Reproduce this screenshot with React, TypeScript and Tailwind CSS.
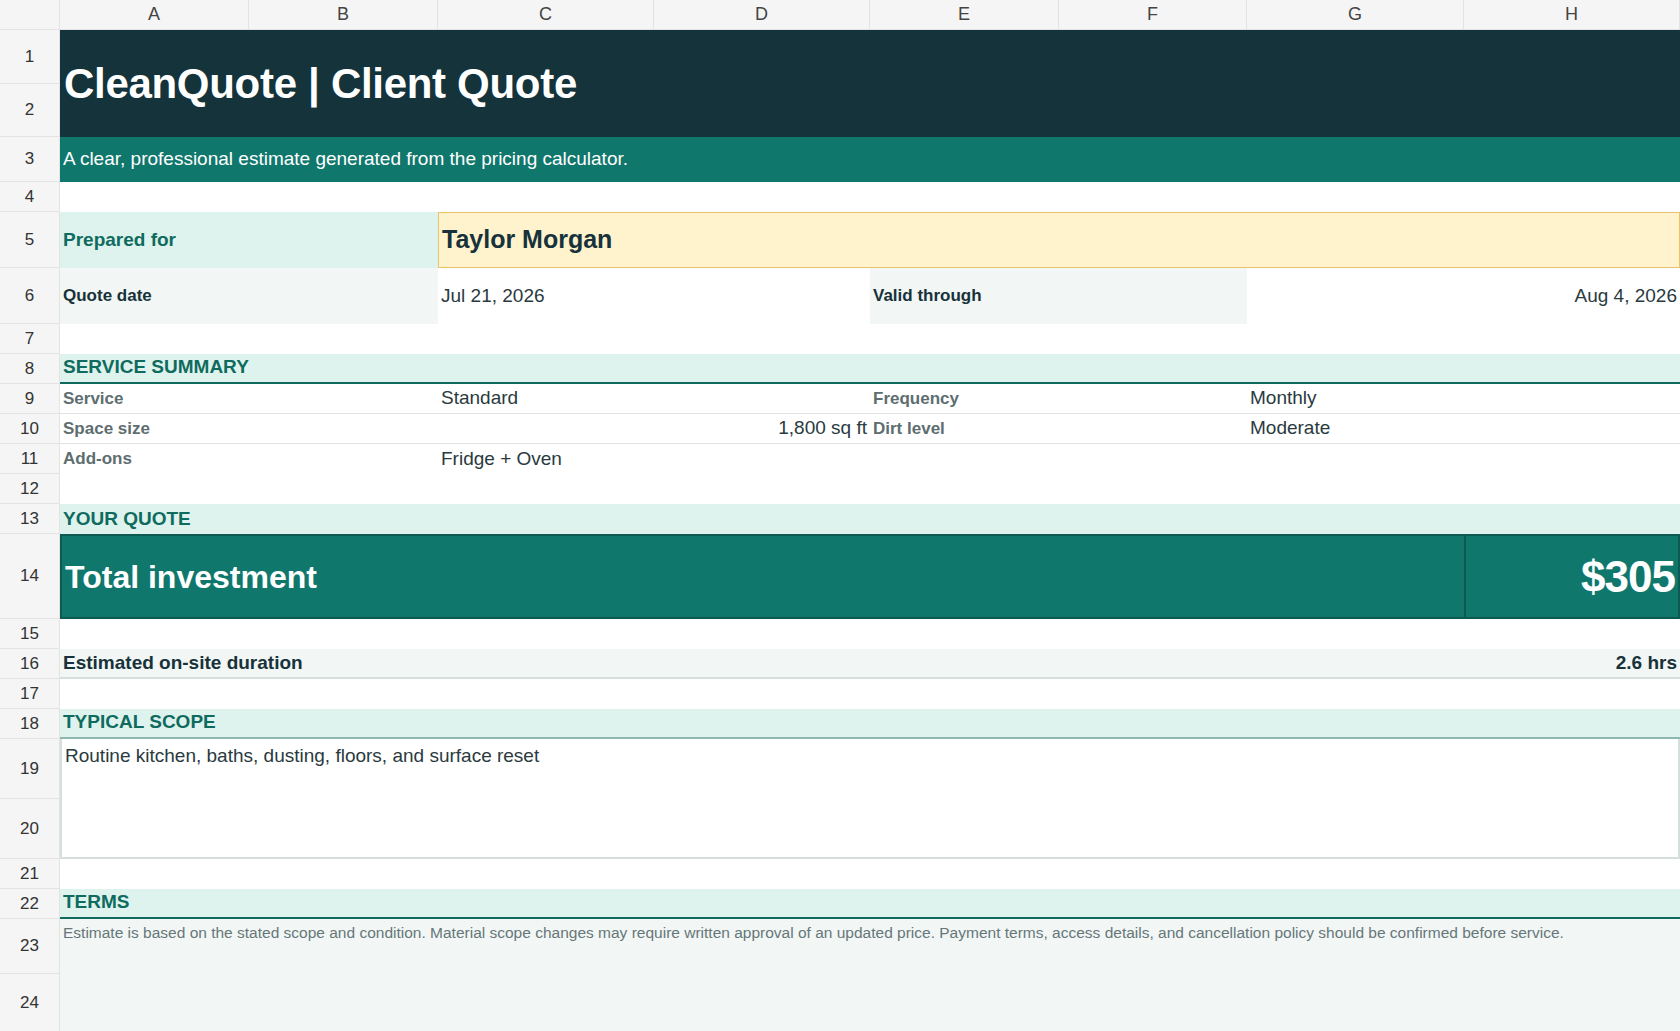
import React from "react";

const RH = ({ n }: { n: number | string }) => (
  <div className="bg-[#f5f5f5] border-r border-b border-[#e3e3e3] flex items-center justify-center text-[17px] text-[#333]">{n}</div>
);

export default function App() {
  const cols = ["A", "B", "C", "D", "E", "F", "G", "H"];
  return (
    <div
      className="w-[1680px] h-[1031px] overflow-hidden bg-white text-[#17323a]"
      style={{ fontFamily: '"Liberation Sans", Arial, sans-serif' }}
    >
      <div className="grid grid-cols-[60px_189px_189px_216px_216px_189px_188px_217px_216px] grid-rows-[30px_54px_53px_45px_30px_56px_56px_30px_30px_30px_30px_30px_30px_30px_85px_30px_30px_30px_30px_60px_60px_30px_30px_55px_58px]">
        {/* header */}
        <div className="bg-[#f5f5f5] border-r border-b border-[#e3e3e3]" />
        {cols.map((c) => (
          <div key={c} className="bg-[#f5f5f5] border-r border-b border-[#e3e3e3] flex items-center justify-center text-[18px] text-[#444]">{c}</div>
        ))}
        {/* 1-2 */}
        <RH n={1} />
        <div className="col-span-8 row-span-2 bg-[#14333b] flex items-center px-[4px] text-white font-bold text-[42px] tracking-[-0.3px]">CleanQuote | Client Quote</div>
        <RH n={2} />
        {/* 3 */}
        <RH n={3} />
        <div className="col-span-8 bg-[#10776d] flex items-center px-[3px] text-white text-[19px]">A clear, professional estimate generated from the pricing calculator.</div>
        {/* 4 */}
        <RH n={4} />
        <div className="col-span-8" />
        {/* 5 */}
        <RH n={5} />
        <div className="col-span-2 bg-[#def3ee] flex items-center px-[3px] text-[#0f6b5e] font-bold text-[19px]">Prepared for</div>
        <div className="col-span-6 bg-[#fef3cd] border-[1.5px] border-[#e9c46a] flex items-center px-[3px] font-bold text-[25px] text-[#17323a]">Taylor Morgan</div>
        {/* 6 */}
        <RH n={6} />
        <div className="col-span-2 bg-[#f2f6f4] flex items-center px-[3px] font-bold text-[17px]">Quote date</div>
        <div className="col-span-2 flex items-center px-[3px] text-[19px] text-[#2a3a3e]">Jul 21, 2026</div>
        <div className="col-span-2 bg-[#f2f6f4] flex items-center px-[3px] font-bold text-[17px]">Valid through</div>
        <div className="col-span-2 flex items-center justify-end px-[3px] text-[19px] text-[#2a3a3e]">Aug 4, 2026</div>
        {/* 7 */}
        <RH n={7} />
        <div className="col-span-8" />
        {/* 8 */}
        <RH n={8} />
        <div className="col-span-8 bg-[#def3ee] border-b-2 border-[#0f6b5e] flex items-end px-[3px] pb-[1px] font-bold text-[19px] text-[#0f6b5e]">SERVICE SUMMARY</div>
        {/* 9 */}
        <RH n={9} />
        <div className="col-span-2 border-b border-[#dfe5e3] flex items-center px-[3px] font-bold text-[17px] text-[#5e6e70]">Service</div>
        <div className="col-span-2 border-b border-[#dfe5e3] flex items-center px-[3px] text-[19px] text-[#2a3a3e]">Standard</div>
        <div className="col-span-2 border-b border-[#dfe5e3] flex items-center px-[3px] font-bold text-[17px] text-[#5e6e70]">Frequency</div>
        <div className="col-span-2 border-b border-[#dfe5e3] flex items-center px-[3px] text-[19px] text-[#2a3a3e]">Monthly</div>
        {/* 10 */}
        <RH n={10} />
        <div className="col-span-2 border-b border-[#dfe5e3] flex items-center px-[3px] font-bold text-[17px] text-[#5e6e70]">Space size</div>
        <div className="col-span-2 border-b border-[#dfe5e3] flex items-center justify-end px-[3px] text-[19px] text-[#2a3a3e]">1,800 sq ft</div>
        <div className="col-span-2 border-b border-[#dfe5e3] flex items-center px-[3px] font-bold text-[17px] text-[#5e6e70]">Dirt level</div>
        <div className="col-span-2 border-b border-[#dfe5e3] flex items-center px-[3px] text-[19px] text-[#2a3a3e]">Moderate</div>
        {/* 11 */}
        <RH n={11} />
        <div className="col-span-2 flex items-center px-[3px] font-bold text-[17px] text-[#5e6e70]">Add-ons</div>
        <div className="col-span-6 flex items-center px-[3px] text-[19px] text-[#2a3a3e]">Fridge + Oven</div>
        {/* 12 */}
        <RH n={12} />
        <div className="col-span-8" />
        {/* 13 */}
        <RH n={13} />
        <div className="col-span-8 bg-[#def3ee] flex items-end px-[3px] pb-[1px] font-bold text-[19px] text-[#0f6b5e]">YOUR QUOTE</div>
        {/* 14 */}
        <RH n={14} />
        <div className="col-span-7 bg-[#10776d] border-2 border-r-0 border-[#0d5a52] flex items-center px-[3px] font-bold text-[32px] text-white">Total investment</div>
        <div className="bg-[#10776d] border-2 border-[#0d5a52] flex items-center justify-end px-[3px] font-bold text-[44px] text-white tracking-[-1px]">$305</div>
        {/* 15 */}
        <RH n={15} />
        <div className="col-span-8" />
        {/* 16 */}
        <RH n={16} />
        <div className="col-span-8 bg-[#f2f6f4] border-b-2 border-[#d5e0dd] flex items-center justify-between px-[3px] font-bold text-[19px]">
          <span>Estimated on-site duration</span>
          <span>2.6 hrs</span>
        </div>
        {/* 17 */}
        <RH n={17} />
        <div className="col-span-8" />
        {/* 18 */}
        <RH n={18} />
        <div className="col-span-8 bg-[#def3ee] border-b-2 border-[#8fb8b0] flex items-end px-[3px] pb-[1px] font-bold text-[19px] text-[#0f6b5e]">TYPICAL SCOPE</div>
        {/* 19-20 */}
        <RH n={19} />
        <div className="col-span-8 row-span-2 border-2 border-t-0 border-[#d5e0dd] px-[3px] pt-[3px] text-[19px] text-[#2a3a3e]">Routine kitchen, baths, dusting, floors, and surface reset</div>
        <RH n={20} />
        {/* 21 */}
        <RH n={21} />
        <div className="col-span-8" />
        {/* 22 */}
        <RH n={22} />
        <div className="col-span-8 bg-[#def3ee] border-b-2 border-[#0f6b5e] flex items-end px-[3px] pb-[1px] font-bold text-[19px] text-[#0f6b5e]">TERMS</div>
        {/* 23 */}
        <RH n={23} />
        <div className="col-span-8 bg-[#f2f6f4] px-[3px] pt-[2px] text-[15.5px] text-[#66777a]">Estimate is based on the stated scope and condition. Material scope changes may require written approval of an updated price. Payment terms, access details, and cancellation policy should be confirmed before service.</div>
        {/* 24 */}
        <RH n={24} />
        <div className="col-span-8 bg-[#f2f6f4]" />
      </div>
    </div>
  );
}
